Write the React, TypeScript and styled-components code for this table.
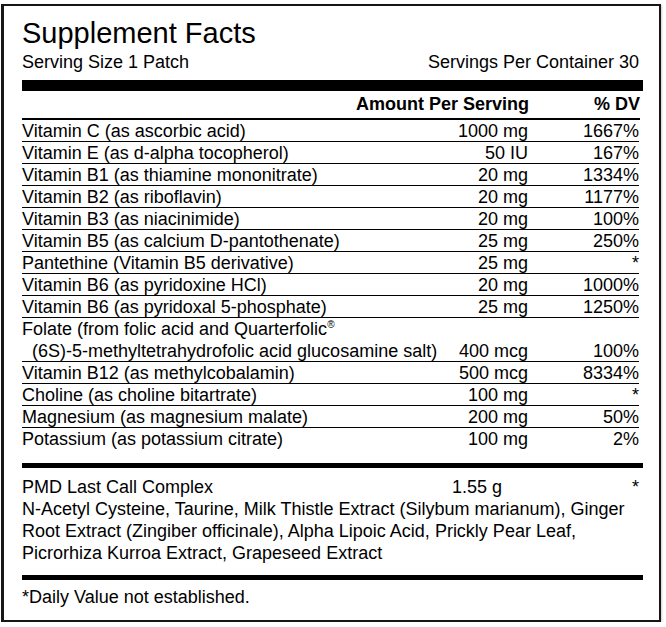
import React from "react";
import styled, { createGlobalStyle } from "styled-components";

const Global = createGlobalStyle`
  html, body { margin: 0; padding: 0; background: #fff; }
  body { font-family: "Liberation Sans", Arial, sans-serif; color: #000; }
`;

const Frame = styled.div`
  box-sizing: border-box;
  margin: 4px 0 0 1px;
  width: 660px;
  height: 618px;
  border: 2px solid #161616;
  border-left-width: 3px;
  padding: 10px 16px 0 18px;
  box-shadow: 1px 1px 2px rgba(0, 0, 0, 0.18);
  font-size: 18px;
`;

const Title = styled.h1`
  margin: 0;
  font-size: 29px;
  font-weight: 400;
  line-height: 35px;
  white-space: nowrap;
`;

const ServingRow = styled.div`
  display: flex;
  justify-content: space-between;
  line-height: 22px;
  margin-right: 4px;
  white-space: nowrap;
`;

const Bar = styled.div<{ $h: number; $top: number }>`
  height: ${(p) => p.$h}px;
  margin-top: ${(p) => p.$top}px;
  background: #000;
`;

const Grid = styled.div`
  display: grid;
  grid-template-columns: 1fr auto 111px;
  white-space: nowrap;
`;

const HeaderRow = styled(Grid)`
  margin-right: 3px;
  padding: 3px 0 4px;
  line-height: 20px;
  font-weight: 700;
  border-bottom: 2px solid #000;
`;

const Row = styled(Grid)<{ $line?: boolean }>`
  box-sizing: border-box;
  height: 22px;
  margin-right: 4px;
  padding-top: 2px;
  line-height: 19px;
  border-bottom: 1px solid ${(p) => (p.$line === false ? "transparent" : "#000")};
`;

const Name = styled.span``;

const Amount = styled.span`
  text-align: right;
`;

const Dv = styled.span`
  text-align: right;
`;

const Sup = styled.sup`
  font-size: 10px;
  line-height: 0;
  vertical-align: 7px;
`;

const Complex = styled.div`
  margin-top: 8px;
  line-height: 22px;
`;

const ComplexHead = styled.div`
  display: grid;
  grid-template-columns: 430px 1fr auto;
  margin-right: 4px;
  white-space: nowrap;
`;

const Ingredients = styled.div`
  white-space: nowrap;
`;

const Footnote = styled.div`
  margin-top: 6px;
  line-height: 22px;
`;

type Item = { name: React.ReactNode; amount: string; dv: string; line?: boolean };

const items: Item[] = [
  { name: "Vitamin C (as ascorbic acid)", amount: "1000 mg", dv: "1667%" },
  { name: "Vitamin E (as d-alpha tocopherol)", amount: "50 IU", dv: "167%" },
  { name: "Vitamin B1 (as thiamine mononitrate)", amount: "20 mg", dv: "1334%" },
  { name: "Vitamin B2 (as riboflavin)", amount: "20 mg", dv: "1177%" },
  { name: "Vitamin B3 (as niacinimide)", amount: "20 mg", dv: "100%" },
  { name: "Vitamin B5 (as calcium D-pantothenate)", amount: "25 mg", dv: "250%" },
  { name: "Pantethine (Vitamin B5 derivative)", amount: "25 mg", dv: "*" },
  { name: "Vitamin B6 (as pyridoxine HCl)", amount: "20 mg", dv: "1000%" },
  { name: "Vitamin B6 (as pyridoxal 5-phosphate)", amount: "25 mg", dv: "1250%" },
  {
    name: (
      <>
        Folate (from folic acid and Quarterfolic<Sup>®</Sup>
      </>
    ),
    amount: "",
    dv: "",
    line: false,
  },
  {
    name: "\u00a0\u00a0(6S)-5-methyltetrahydrofolic acid glucosamine salt)",
    amount: "400 mcg",
    dv: "100%",
  },
  { name: "Vitamin B12 (as methylcobalamin)", amount: "500 mcg", dv: "8334%" },
  { name: "Choline (as choline bitartrate)", amount: "100 mg", dv: "*" },
  { name: "Magnesium (as magnesium malate)", amount: "200 mg", dv: "50%" },
  { name: "Potassium (as potassium citrate)", amount: "100 mg", dv: "2%", line: false },
];

export default function App() {
  return (
    <>
      <Global />
      <Frame>
        <Title>Supplement Facts</Title>
        <ServingRow>
          <span>Serving Size 1 Patch</span>
          <span>Servings Per Container 30</span>
        </ServingRow>
        <Bar $h={11} $top={7} />
        <HeaderRow>
          <Name />
          <Amount>Amount Per Serving</Amount>
          <Dv>% DV</Dv>
        </HeaderRow>
        {items.map((it, i) => (
          <Row key={i} $line={it.line}>
            <Name>{it.name}</Name>
            <Amount>{it.amount}</Amount>
            <Dv>{it.dv}</Dv>
          </Row>
        ))}
        <Bar $h={5} $top={13} />
        <Complex>
          <ComplexHead>
            <span>PMD Last Call Complex</span>
            <span>1.55 g</span>
            <span>*</span>
          </ComplexHead>
          <Ingredients>
            N-Acetyl Cysteine, Taurine, Milk Thistle Extract (Silybum marianum), Ginger
            <br />
            Root Extract (Zingiber officinale), Alpha Lipoic Acid, Prickly Pear Leaf,
            <br />
            Picrorhiza Kurroa Extract, Grapeseed Extract
          </Ingredients>
        </Complex>
        <Bar $h={5} $top={11} />
        <Footnote>*Daily Value not established.</Footnote>
      </Frame>
    </>
  );
}
